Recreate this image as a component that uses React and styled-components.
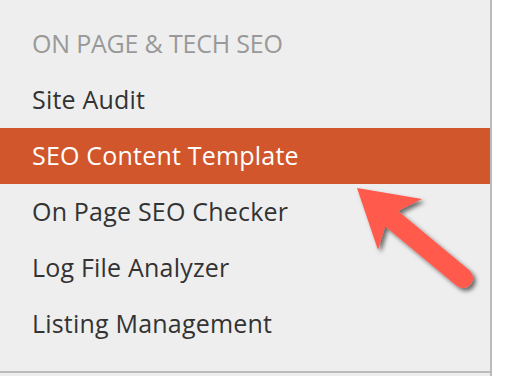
import React from 'react';
import styled, { createGlobalStyle } from 'styled-components';

const GlobalStyle = createGlobalStyle`
  html, body {
    margin: 0;
    padding: 0;
    background: #ffffff;
  }
  body {
    font-family: "Open Sans", "Liberation Sans", sans-serif;
  }
`;

const Sidebar = styled.div`
  position: relative;
  width: 490px;
  height: 376px;
  background: #eeeeee;
  border-right: 2px solid #bbbbbb;
  overflow: hidden;
`;

const Menu = styled.ul`
  list-style: none;
  margin: 0;
  padding: 16px 0 19px;
  border-bottom: 2px solid #bbbbbb;
`;

const Item = styled.li`
  height: 56px;
  line-height: 54px;
  padding-left: 32px;
  font-size: 25px;
  letter-spacing: ${props => props.heading ? '-0.2px' : '0.2px'};
  white-space: nowrap;
  color: ${props => props.heading ? '#999999' : props.active ? '#ffffff' : '#333333'};
  background: ${props => props.active ? '#d1562c' : 'transparent'};
`;

const Arrow = styled.svg`
  position: absolute;
  left: 340px;
  top: 175px;
  overflow: visible;
`;

const items = [
  'Site Audit',
  'SEO Content Template',
  'On Page SEO Checker',
  'Log File Analyzer',
  'Listing Management',
];

export default function App() {
  return (
    <>
      <GlobalStyle />
      <Sidebar>
        <Menu>
          <Item heading>ON PAGE &amp; TECH SEO</Item>
          {items.map(name => (
            <Item key={name} active={name === 'SEO Content Template'}>{name}</Item>
          ))}
        </Menu>
        <Arrow width="140" height="120" viewBox="340 175 140 120">
          <defs>
            <filter id="shadow" x="-20%" y="-20%" width="150%" height="150%">
              <feDropShadow dx="3" dy="3" stdDeviation="2" floodColor="#000" floodOpacity="0.55" />
            </filter>
          </defs>
          <g filter="url(#shadow)" fill="#ff5a4b" stroke="#ff5a4b">
            <line x1="392" y1="219" x2="463" y2="278" strokeWidth="20" strokeLinecap="round" />
            <polygon points="357,188 422,199 398,211 385,227 378,250" stroke="none" />
          </g>
        </Arrow>
      </Sidebar>
    </>
  );
}
